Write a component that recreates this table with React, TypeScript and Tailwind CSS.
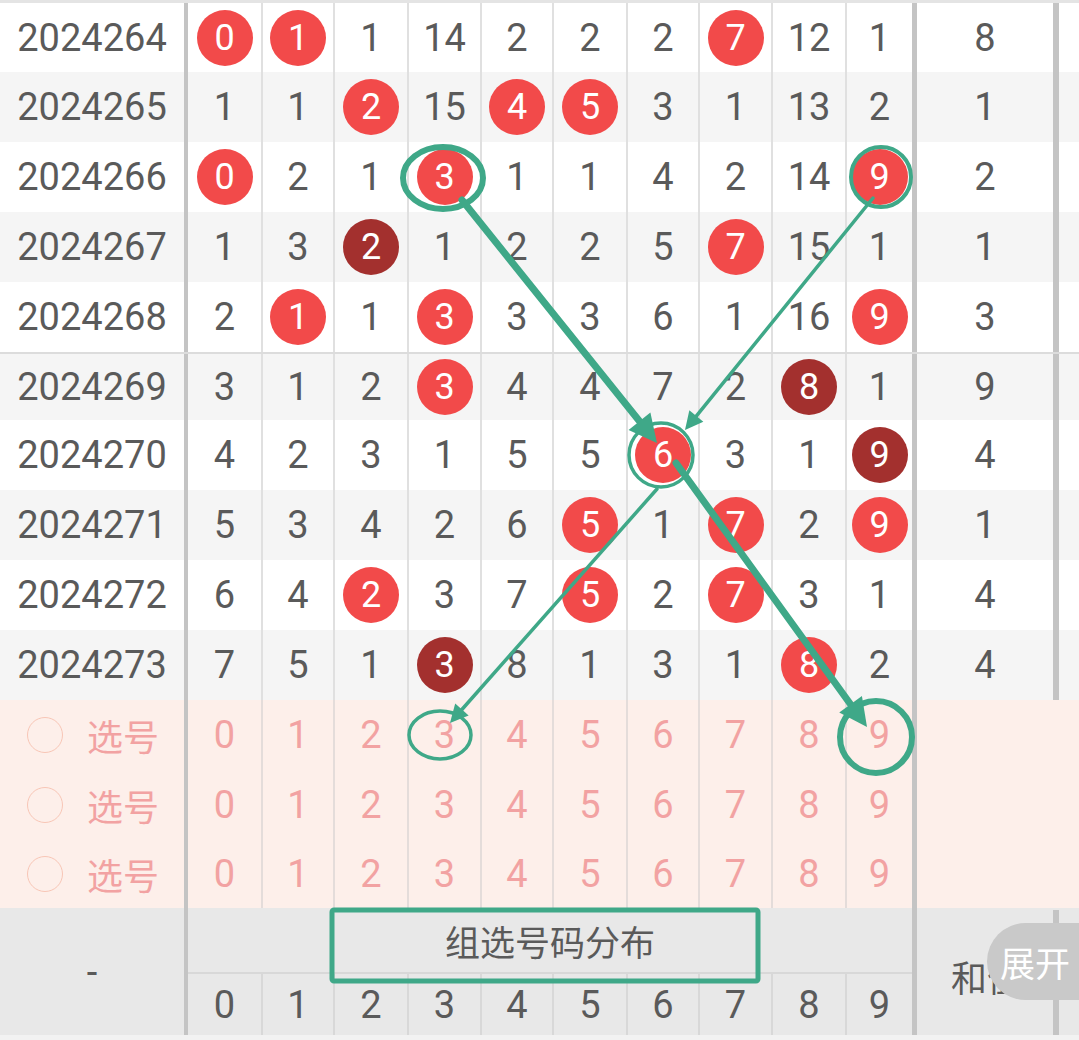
import React from "react"

type Row = { date: string; cells: string[]; sum: string }

// "r" = red ball, "d" = dark ball
const rows: Row[] = [
    { date: "2024264", cells: ["0r", "1r", "1", "14", "2", "2", "2", "7r", "12", "1"], sum: "8" },
    { date: "2024265", cells: ["1", "1", "2r", "15", "4r", "5r", "3", "1", "13", "2"], sum: "1" },
    { date: "2024266", cells: ["0r", "2", "1", "3r", "1", "1", "4", "2", "14", "9r"], sum: "2" },
    { date: "2024267", cells: ["1", "3", "2d", "1", "2", "2", "5", "7r", "15", "1"], sum: "1" },
    { date: "2024268", cells: ["2", "1r", "1", "3r", "3", "3", "6", "1", "16", "9r"], sum: "3" },
    { date: "2024269", cells: ["3", "1", "2", "3r", "4", "4", "7", "2", "8d", "1"], sum: "9" },
    { date: "2024270", cells: ["4", "2", "3", "1", "5", "5", "6r", "3", "1", "9d"], sum: "4" },
    { date: "2024271", cells: ["5", "3", "4", "2", "6", "5r", "1", "7r", "2", "9r"], sum: "1" },
    { date: "2024272", cells: ["6", "4", "2r", "3", "7", "5r", "2", "7r", "3", "1"], sum: "4" },
    { date: "2024273", cells: ["7", "5", "1", "3d", "8", "1", "3", "1", "8r", "2"], sum: "4" },
]

const colW = [
    "w-[75px]", "w-[72px]", "w-[74px]", "w-[73px]", "w-[72px]",
    "w-[74px]", "w-[72px]", "w-[73px]", "w-[74px]", "w-[65px]",
]

const rowH = [
    "h-[69px]", "h-[70px]", "h-[70px]", "h-[70px]", "h-[70px]",
    "h-[66px]", "h-[70px]", "h-[70px]", "h-[70px]", "h-[70px]",
]

function Cell({ value }: { value: string }) {
    const kind = value.slice(-1)
    if (kind === "r" || kind === "d") {
        return (
            <span
                className={`flex h-[56px] w-[56px] items-center justify-center rounded-full text-[36px] text-white ${
                    kind === "r" ? "bg-[#f24a4a]" : "bg-[#a3302e]"
                }`}
            >
                {value.slice(0, -1)}
            </span>
        )
    }
    return <span>{value}</span>
}

function DataRow({ row, index }: { row: Row; index: number }) {
    const bg = index % 2 ? "bg-[#f5f5f5]" : "bg-white"
    return (
        <div className={`flex ${rowH[index]} ${bg}`}>
            <div className="flex w-[184px] items-center justify-center">{row.date}</div>
            <div className="w-[4px] bg-[#c4c4c4]" />
            {row.cells.map((c, j) => (
                <div
                    key={j}
                    className={`flex ${colW[j]} items-center justify-center ${
                        j < 9 ? "border-r-2 border-[#e0e0e0]" : ""
                    }`}
                >
                    <Cell value={c} />
                </div>
            ))}
            <div className="w-[5px] bg-[#c4c4c4]" />
            <div className="flex w-[136px] items-center justify-center">{row.sum}</div>
            <div className="w-[6px] bg-[#c4c4c4]" />
            <div className="flex-1" />
        </div>
    )
}

function PickRow({ h }: { h: string }) {
    return (
        <div className={`flex ${h} bg-[#fdefea] text-[#f2a2a2]`}>
            <div className="flex w-[184px] items-center">
                <span className="ml-[27px] h-[36px] w-[36px] rounded-full border-[1.5px] border-[#f8c6b6]" />
                <span className="ml-[24px] font-['Noto_Sans_CJK_SC',sans-serif] text-[36px]">选号</span>
            </div>
            <div className="w-[4px] bg-[#c4c4c4]" />
            {colW.map((w, j) => (
                <div
                    key={j}
                    className={`flex ${w} items-center justify-center ${
                        j < 9 ? "border-r-2 border-[#e4dcda]" : ""
                    }`}
                >
                    {j}
                </div>
            ))}
            <div className="w-[5px] bg-[#c4c4c4]" />
            <div className="flex-1" />
        </div>
    )
}

function Arrow({
    from,
    to,
    width,
    head,
}: {
    from: [number, number]
    to: [number, number]
    width: number
    head: number
}) {
    const dx = to[0] - from[0]
    const dy = to[1] - from[1]
    const len = Math.hypot(dx, dy)
    const ux = dx / len
    const uy = dy / len
    const bx = to[0] - ux * head
    const by = to[1] - uy * head
    const w = head * 0.5
    const pts = `${to[0]},${to[1]} ${bx - uy * w},${by + ux * w} ${bx + uy * w},${by - ux * w}`
    return (
        <g>
            <line x1={from[0]} y1={from[1]} x2={bx + ux * 2} y2={by + uy * 2} strokeWidth={width} />
            <polygon points={pts} fill="#3fa888" stroke="none" />
        </g>
    )
}

function Marks() {
    return (
        <svg
            className="pointer-events-none absolute left-0 top-0"
            width={1079}
            height={1040}
            fill="none"
            stroke="#3fa888"
            strokeLinecap="round"
        >
            <ellipse cx={443} cy={178} rx={40} ry={31} strokeWidth={6} />
            <circle cx={881} cy={177} r={30} strokeWidth={4} />
            <circle cx={661} cy={455} r={32} strokeWidth={3.5} />
            <ellipse cx={440} cy={735} rx={31} ry={24} strokeWidth={3.5} />
            <circle cx={876} cy={737} r={36} strokeWidth={6} />
            <rect x={332} y={910} width={426} height={71} rx={2} strokeWidth={5} />
            <Arrow from={[462, 200]} to={[657, 443]} width={7} head={28} />
            <Arrow from={[873, 198]} to={[685, 430]} width={3.5} head={18} />
            <Arrow from={[657, 489]} to={[450, 723]} width={3.5} head={18} />
            <Arrow from={[676, 463]} to={[867, 727]} width={7} head={28} />
        </svg>
    )
}

export default function App() {
    return (
        <div className="relative h-[1040px] w-[1079px] overflow-hidden bg-white font-['Roboto',sans-serif] text-[38px] leading-none text-[#5a5a5a]">
            <div className="h-[3px] bg-[#e4e4e4]" />
            {rows.slice(0, 5).map((r, i) => (
                <DataRow key={r.date} row={r} index={i} />
            ))}
            <div className="h-[2px] bg-[#dcdcdc]" />
            {rows.slice(5).map((r, i) => (
                <DataRow key={r.date} row={r} index={i + 5} />
            ))}

            <PickRow h="h-[70px]" />
            <PickRow h="h-[70px]" />
            <PickRow h="h-[68px]" />

            <div className="flex h-[127px] bg-[#e8e8e8]">
                <div className="flex w-[184px] items-center justify-center">-</div>
                <div className="w-[4px] bg-[#c4c4c4]" />
                <div className="flex w-[724px] flex-col">
                    <div className="flex h-[64px] items-center justify-center font-['Noto_Sans_CJK_SC',sans-serif] text-[35px]">
                        组选号码分布
                    </div>
                    <div className="h-[2px] bg-[#d8d8d8]" />
                    <div className="flex flex-1">
                        {colW.map((w, j) => (
                            <div
                                key={j}
                                className={`flex ${w} items-center justify-center ${
                                    j < 9 ? "border-r-2 border-[#d8d8d8]" : ""
                                }`}
                            >
                                {j}
                            </div>
                        ))}
                    </div>
                </div>
                <div className="w-[5px] bg-[#c4c4c4]" />
                <div className="flex w-[136px] items-center pl-[34px] pt-[8px] font-['Noto_Sans_CJK_SC',sans-serif] text-[36px]">
                    和值
                </div>
                <div className="mt-[2px] w-[6px] bg-[#c4c4c4]" />
                <div className="flex-1" />
            </div>
            <div className="h-[5px] bg-[#f2f2f2]" />

            <div className="absolute left-[987px] top-[923px] flex h-[77px] w-[100px] items-center rounded-l-full bg-[#c9c9c9] pl-[13px] font-['Noto_Sans_CJK_SC',sans-serif] text-[35px] text-white">
                展开
            </div>

            <Marks />
        </div>
    )
}
